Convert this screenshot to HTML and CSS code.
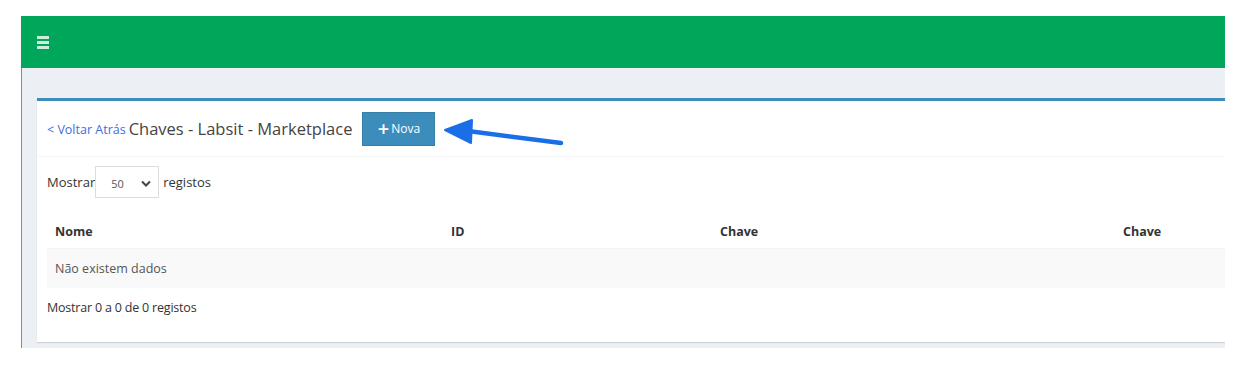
FILE: index.html
```html
<!DOCTYPE html>
<html lang="pt">
<head>
    <meta charset="UTF-8">
    <title>Chaves - Labsit - Marketplace</title>
    <link rel="stylesheet" href="styles.css">
</head>
<body>
    <div class="shot">
        <header class="topbar">
            <span class="burger"><i></i><i></i><i></i></span>
        </header>
        <div class="content">
            <div class="box">
                <div class="box-header">
                    <a class="back" href="#">&lt; Voltar Atrás</a>
                    <span class="title">Chaves - Labsit - Marketplace</span>
                    <button class="btn-new"><span class="plus">+</span>Nova</button>
                    <svg class="arrow" width="130" height="40" viewBox="0 0 130 40">
                        <path d="M28 19 L121 31" stroke="#1a6fe8" stroke-width="4.5" stroke-linecap="round" fill="none"/>
                        <path d="M5 18 L32 8 L31 31 Z" fill="#1a6fe8" stroke="#1a6fe8" stroke-width="2" stroke-linejoin="round"/>
                    </svg>
                </div>
                <div class="box-body">
                    <div class="length">
                        Mostrar
                        <span class="select">50
                            <svg width="10" height="7" viewBox="0 0 10 7"><path d="M1 1.5 L5 5.5 L9 1.5" stroke="#444" stroke-width="2" fill="none"/></svg>
                        </span>
                        registos
                    </div>
                    <table class="grid">
                        <thead>
                            <tr>
                                <th class="c1">Nome</th>
                                <th class="c2">ID</th>
                                <th class="c3">Chave</th>
                                <th>Chave</th>
                            </tr>
                        </thead>
                        <tbody>
                            <tr><td colspan="4">Não existem dados</td></tr>
                        </tbody>
                    </table>
                    <div class="info">Mostrar 0 a 0 de 0 registos</div>
                </div>
            </div>
        </div>
    </div>
</body>
</html>
```

FILE: styles.css
```css
body {
    margin: 0;
    background: #fff;
    font-family: "Open Sans", sans-serif;
    color: #333;
}
.shot {
    margin: 16px 0 0 21px;
    width: 1204px;
    height: 332px;
    overflow: hidden;
}
.topbar {
    height: 52px;
    background: #00a65a;
    display: flex;
    align-items: center;
    padding-left: 16px;
}
.burger {
    display: flex;
    flex-direction: column;
    gap: 2px;
    width: 12px;
}
.burger i {
    height: 3px;
    background: rgba(255, 255, 255, 0.8);
}
.content {
    background: #ecf0f5;
    border-left: 1px solid #8a8a8a;
    height: 280px;
    padding: 30px 0 0 15px;
    box-sizing: border-box;
}
.box {
    background: #fff;
    border-top: 3px solid #3c8dbc;
    height: 241px;
    box-shadow: 0 1px 1px rgba(0, 0, 0, 0.12);
}
.box-header {
    position: relative;
    height: 55px;
    border-bottom: 1px solid #f4f4f4;
    display: flex;
    align-items: center;
    padding-left: 10px;
}
.back {
    color: #3c6fe0;
    font-size: 12.5px;
    text-decoration: none;
    margin-right: 3px;
    margin-top: 2px;
}
.title {
    font-size: 16.5px;
    color: #444;
}
.btn-new {
    margin-left: 10px;
    width: 73px;
    height: 34px;
    background: #3c8dbc;
    border: 1px solid #367fa9;
    color: #fff;
    font-family: inherit;
    font-size: 12px;
    display: flex;
    align-items: center;
    justify-content: center;
    padding: 0;
}
.btn-new .plus {
    font-size: 20px;
    font-weight: 600;
    margin-right: 2px;
    line-height: 1;
}
.arrow {
    position: absolute;
    left: 403px;
    top: 11px;
}
.box-body {
    padding: 9px 10px 0;
}
.length {
    display: flex;
    align-items: center;
    font-size: 13px;
    color: #333;
}
.select {
    display: flex;
    align-items: center;
    justify-content: space-between;
    width: 64px;
    height: 32px;
    box-sizing: border-box;
    border: 1px solid #ddd;
    margin: 0 4px 0 0;
    padding: 2px 7px 0 15px;
    font-size: 11px;
    color: #555;
}
.grid {
    width: 1300px;
    border-collapse: collapse;
    margin-top: 12px;
    font-size: 12.5px;
}
.grid th {
    text-align: left;
    font-weight: 700;
    color: #333;
    padding: 13px 8px 8px;
    border-bottom: 1px solid #f4f4f4;
}
.grid .c1 { width: 380px; }
.grid .c2 { width: 253px; }
.grid .c3 { width: 387px; }
.grid td {
    background: #f9f9f9;
    height: 39px;
    padding: 0 8px;
    color: #555;
    box-sizing: border-box;
}
.info {
    font-size: 12.5px;
    color: #333;
    margin-top: 11px;
    letter-spacing: -0.2px;
}
```
